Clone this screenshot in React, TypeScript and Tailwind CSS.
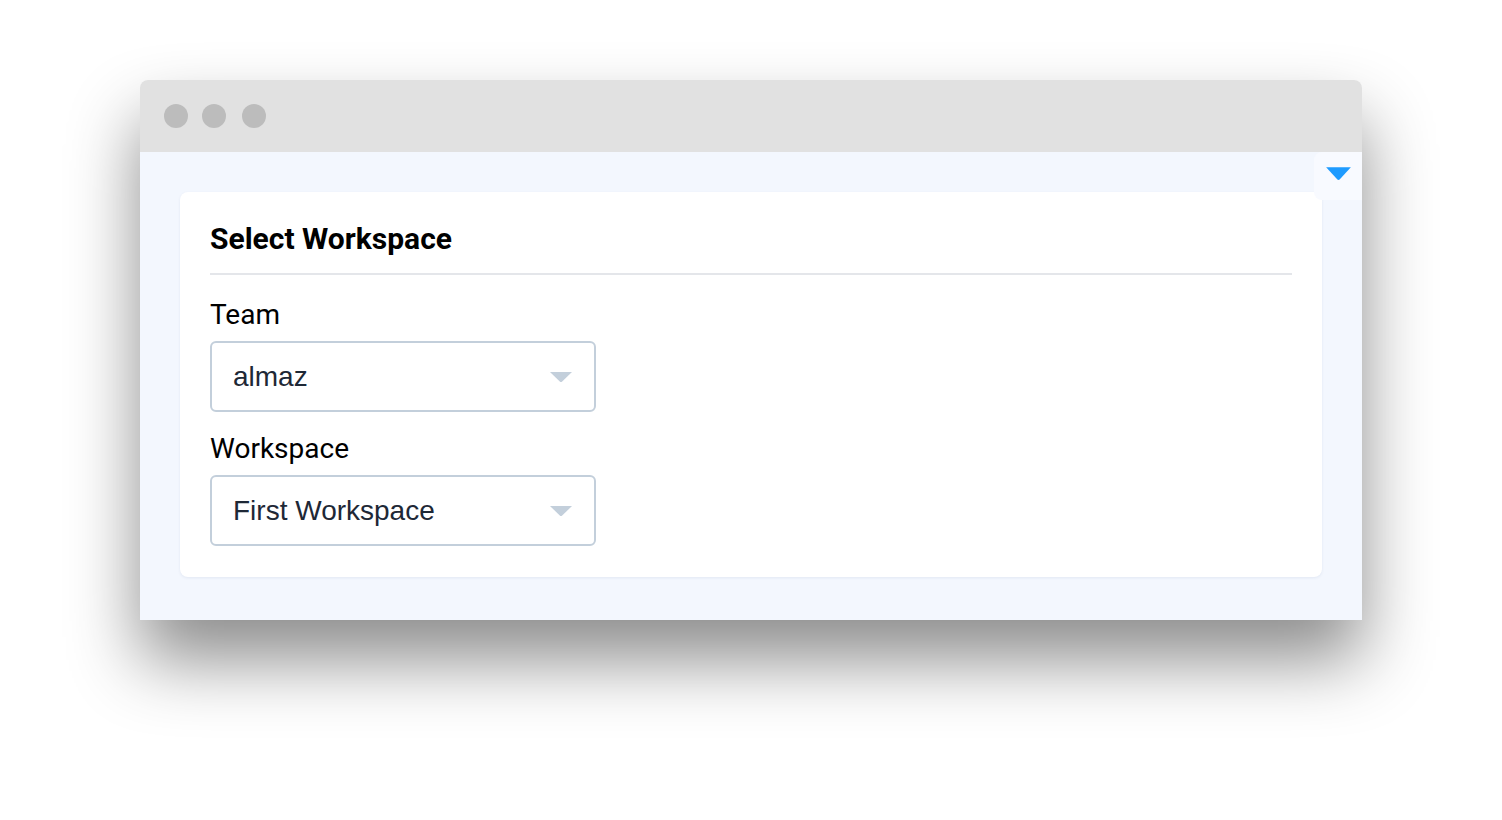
import React from 'react'

function Caret({ className }: { className: string }) {
  return (
    <svg viewBox="0 0 24 12" preserveAspectRatio="none" className={className}>
      <path d="M1 1 H23 L13.2 10.6 Q12 11.6 10.8 10.6 Z" fill="currentColor" />
    </svg>
  )
}

function SelectBox({ value }: { value: string }) {
  return (
    <div className="flex h-[71px] w-[386px] items-center justify-between rounded-[6px] border-2 border-[#c3cfdb] bg-white pl-[21px] pr-[21px]">
      <span className="text-[28px] text-[#1e2836]" style={{ fontFamily: '"Liberation Sans", Arial, sans-serif' }}>
        {value}
      </span>
      <Caret className="mt-[1px] h-[12px] w-[24px] text-[#c3cfdb]" />
    </div>
  )
}

export default function App() {
  return (
    <div className="flex h-[820px] w-full justify-center bg-white pt-[80px]" style={{ fontFamily: 'Roboto, "Noto Sans", sans-serif' }}>
      <div className="h-[540px] w-[1222px] rounded-t-[8px] shadow-[0_40px_70px_rgba(0,0,0,0.45)]">
        {/* title bar */}
        <div className="flex h-[72px] items-center gap-[14px] rounded-t-[8px] bg-[#e1e1e1] pl-[24px]">
          <span className="h-[24px] w-[24px] rounded-full bg-[#bcbcbc]" />
          <span className="h-[24px] w-[24px] rounded-full bg-[#bcbcbc]" />
          <span className="ml-[2px] h-[24px] w-[24px] rounded-full bg-[#bcbcbc]" />
        </div>
        {/* content */}
        <div className="relative h-[468px] bg-[#f3f7fe] px-[40px] pt-[40px]">
          <div className="absolute right-0 top-0 flex h-[48px] w-[48px] items-center justify-center rounded-l-[8px] bg-[#f8faff]">
            <Caret className="mt-[-5px] h-[15px] w-[27px] text-[#1e9bff]" />
          </div>
          <div className="h-[385px] rounded-[8px] bg-white px-[30px] pt-[28px] shadow-[0_1px_3px_rgba(30,50,120,0.08)]">
            <h2 className="border-b-2 border-[#e4e6ea] pb-[15px] text-[30px] font-bold leading-[38px] text-black">
              Select Workspace
            </h2>
            <div className="mt-[24px] text-[28px] leading-[32px] text-black">Team</div>
            <div className="mt-[10px]">
              <SelectBox value="almaz" />
            </div>
            <div className="mt-[21px] text-[28px] leading-[32px] text-black">Workspace</div>
            <div className="mt-[10px]">
              <SelectBox value="First Workspace" />
            </div>
          </div>
        </div>
      </div>
    </div>
  )
}
